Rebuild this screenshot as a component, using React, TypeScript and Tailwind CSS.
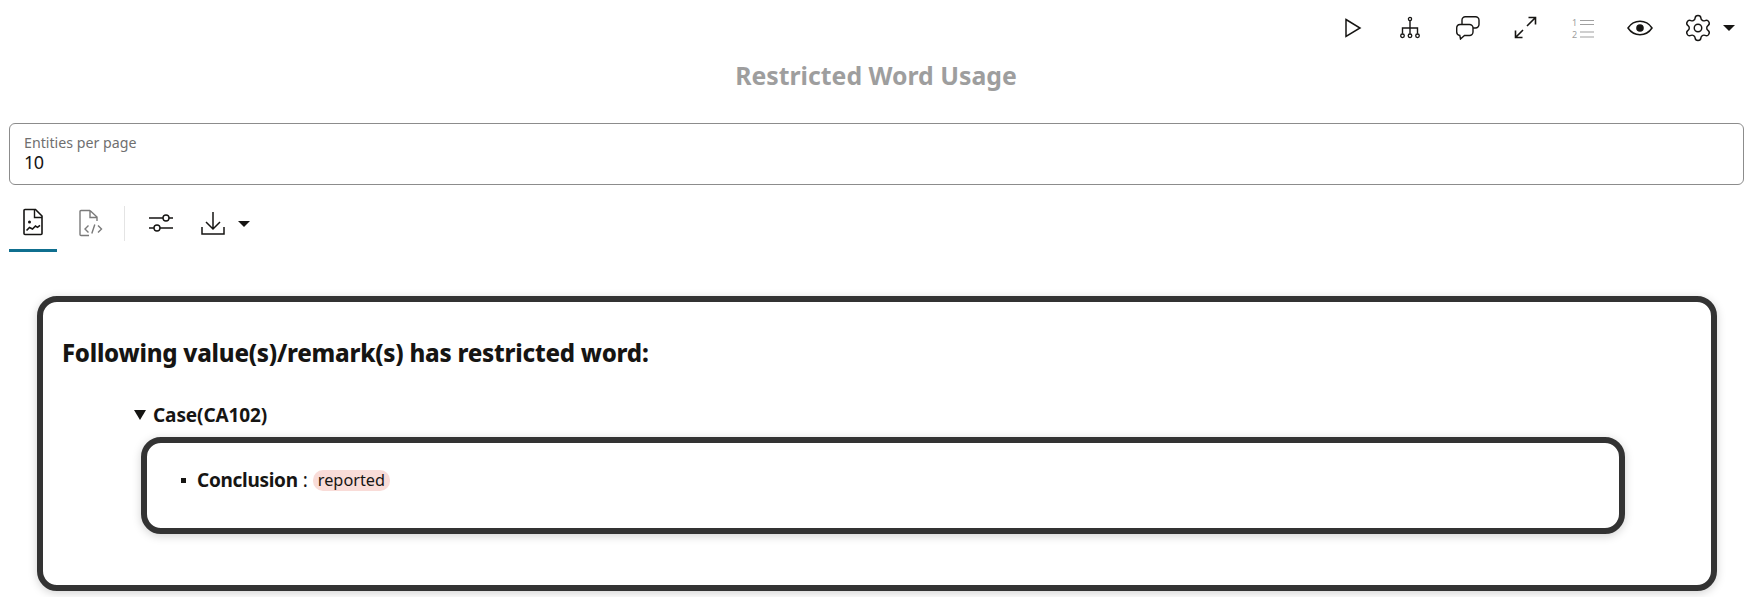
import React from 'react'
import { Settings } from 'lucide-react'

const INK = '#161513'

function Caret() {
  return (
    <svg width="12" height="6" viewBox="0 0 12 6" className="block">
      <path d="M0 0h12L6 6z" fill={INK} />
    </svg>
  )
}

function Icon({ children, color = INK, size = 24 }: { children: React.ReactNode; color?: string; size?: number }) {
  return (
    <svg width={size} height={size} viewBox="0 0 24 24" fill="none" stroke={color} strokeWidth="1.3" className="block">
      {children}
    </svg>
  )
}

function ToolButton({ children }: { children: React.ReactNode }) {
  return <button className="flex h-[24px] w-[57.5px] items-center justify-center">{children}</button>
}

function TopToolbar() {
  return (
    <div className="flex h-[56px] items-center justify-end pr-[7px]">
      <ToolButton>
        <Icon><path d="M5 3.500 19 12 5 20.500z" strokeWidth="1.5" /></Icon>
      </ToolButton>
      <ToolButton>
        <Icon>
          <circle cx="12" cy="3" r="1.6" />
          <path d="M12 4.600V17.800M4.500 17.800V12h15v5.800" strokeWidth="1.4" />
          <circle cx="4.500" cy="19.800" r="1.800" />
          <circle cx="12" cy="19.800" r="1.800" />
          <circle cx="19.500" cy="19.800" r="1.800" />
        </Icon>
      </ToolButton>
      <ToolButton>
        <Icon>
          <path d="M4 8.500h9.500a3.500 3.500 0 0 1 3.500 3.500v4a3.500 3.500 0 0 1-3.500 3.500H8.500L4.500 23l-.7-3.600A3.500 3.500 0 0 1 .7 16v-4A3.500 3.500 0 0 1 4 8.500z" strokeWidth="1.4" />
          <path d="M6 8V4a3.300 3.300 0 0 1 3.300-3.300h10.200A3.500 3.500 0 0 1 23 4.200v4.300a3.500 3.500 0 0 1-3.500 3.500H17" strokeWidth="1.4" />
        </Icon>
      </ToolButton>
      <ToolButton>
        <Icon>
          <path d="M2.500 21.500 10 14M14 10l8.500-8.500M15.500 1.500h7v7M2.500 14.500v7h7" strokeWidth="1.6" />
        </Icon>
      </ToolButton>
      <ToolButton>
        <svg width="24" height="24" viewBox="0 0 24 24" className="block">
          <text x="1" y="9.500" fontSize="9" fill="#9e9e9e" fontFamily="'Noto Sans', sans-serif">1</text>
          <text x="1" y="21.500" fontSize="9" fill="#9e9e9e" fontFamily="'Noto Sans', sans-serif">2</text>
          <path d="M9 4.500h14M9 8.500h14M9 16h14M9 21h14" stroke="#a0a0a0" strokeWidth="1.2" />
        </svg>
      </ToolButton>
      <ToolButton>
        <svg width="26" height="26" viewBox="0 0 26 26" fill="none" className="block">
          <path d="M1 13C4 8.500 8.200 6.300 13 6.300S22 8.500 25 13c-3 4.500-7.200 6.700-12 6.700S4 17.500 1 13z" stroke={INK} strokeWidth="1.5" />
          <circle cx="13" cy="13" r="3.800" fill={INK} />
        </svg>
      </ToolButton>
      <button className="flex h-[24px] w-[71px] items-center justify-start gap-[10px] pl-[14px]">
        <Settings size={30} strokeWidth={1.15} color={INK} className="shrink-0" />
        <Caret />
      </button>
    </div>
  )
}

function ChartFileIcon() {
  return (
    <svg width="24" height="28" viewBox="0 0 24 28" fill="none" stroke={INK} strokeWidth="1.6" className="block">
      <path d="M14.500 1.500H4a1 1 0 0 0-1 1v23a1 1 0 0 0 1 1h16a1 1 0 0 0 1-1V8z" />
      <path d="M13.500 2v7.500H21" strokeWidth="1.4" />
      <circle cx="8.500" cy="14" r="1.500" fill={INK} stroke="none" />
      <path d="M5.500 22.500l3-3 3 1.500 3-3 2 1.300 2.500-2" />
    </svg>
  )
}

function CodeFileIcon() {
  return (
    <svg width="24" height="28" viewBox="0 0 24 28" fill="none" stroke="#7a7a7a" strokeWidth="1.4" className="block">
      <path d="M11 1.500H2a1 1 0 0 0-1 1v23a1 1 0 0 0 1 1h8" />
      <path d="M11 1.500 18 8v4M11 2v6.500h7" />
      <path d="M9.500 16.500 6 20l3.500 3.500M19 16.500l3.500 3.500-3.500 3.500M15.800 15.500l-3 9" />
    </svg>
  )
}

function SubToolbar() {
  return (
    <div className="mt-[18px] flex h-[49px] items-stretch">
      <div className="flex w-[48px] items-center justify-center border-b-[3px] border-[#0f6f8f] pb-[8px]">
        <ChartFileIcon />
      </div>
      <div className="ml-[10px] flex w-[48px] items-center justify-center pb-[10px]">
        <CodeFileIcon />
      </div>
      <div className="ml-[9px] mt-[3px] mb-[11px] w-px bg-[#e4e4e4]" />
      <div className="ml-[24px] flex items-center pb-[10px]">
        <svg width="24" height="20" viewBox="0 0 24 20" fill="none" stroke={INK} strokeWidth="1.4" className="block">
          <path d="M0 5h14M20 5h4M0 15h5M11 15h13" />
          <circle cx="17" cy="5" r="3" />
          <circle cx="8" cy="15" r="3" />
        </svg>
      </div>
      <div className="ml-[28px] flex items-center pb-[10px]">
        <svg width="24" height="24" viewBox="0 0 24 24" fill="none" stroke={INK} strokeWidth="1.5" className="block">
          <path d="M12 1v17M5 11l7 7 7-7M1 16v7h22v-7" />
        </svg>
      </div>
      <div className="ml-[13px] flex items-center pb-[8px]">
        <Caret />
      </div>
    </div>
  )
}

export default function App() {
  return (
    <div className="h-[597px] w-full overflow-hidden bg-white font-['Noto_Sans',sans-serif] text-[#161513]">
      <TopToolbar />
      <h1 className="ml-[5px] mt-[4px] h-[30px] text-center text-[24.8px] leading-[30px] font-bold text-[#9e9e9e]">
        Restricted Word Usage
      </h1>
      <div className="pl-[9px] pr-[3px]">
        <div className="mt-[33px] h-[62px] rounded-[6px] border border-[#8c8c8c] pl-[14px] pt-[10px]">
          <div className="text-[14.2px] leading-[18px] text-[#6f6f6f]">Entities per page</div>
          <div className="-mt-px text-[18px] leading-[22px] tracking-[-0.5px]">10</div>
        </div>
        <SubToolbar />
      </div>
      <div className="ml-[37px] mt-[44px] h-[295px] w-[1680px] rounded-[20px] border-[6px] border-[#333333] bg-white px-[19px] shadow-[0_2px_10px_rgba(0,0,0,0.18)]">
        <h2 className="mt-[35px] text-[24px] leading-[32px] font-extrabold tracking-[-0.23px]">
          Following value(s)/remark(s) has restricted word:
        </h2>
        <details open className="mt-[33px] ml-[72px]">
          <summary className="flex list-none items-center gap-[7px] text-[19px] leading-[26px] font-bold tracking-[-0.1px]">
            <svg width="12" height="10" viewBox="0 0 12 10" className="block">
              <path d="M0 0h12L6 10z" fill={INK} />
            </svg>
            Case(CA102)
          </summary>
          <div className="ml-[7px] mt-[9px] h-[97px] w-[1484px] rounded-[20px] border-[6px] border-[#333333] bg-white pt-[24px] pl-[34px] shadow-[0_2px_10px_rgba(0,0,0,0.18)]">
            <div className="flex items-center text-[19px] leading-[26px]">
              <span className="h-[5px] w-[5px] bg-[#161513]" />
              <span className="ml-[11px] font-bold tracking-[-0.3px]">Conclusion</span>
              <span className="ml-[5px]">:</span>
              <span className="ml-[5px] rounded-[10px] bg-[#f9dcd8] px-[5px] text-[16.3px] leading-[21px]">reported</span>
            </div>
          </div>
        </details>
      </div>
    </div>
  )
}
